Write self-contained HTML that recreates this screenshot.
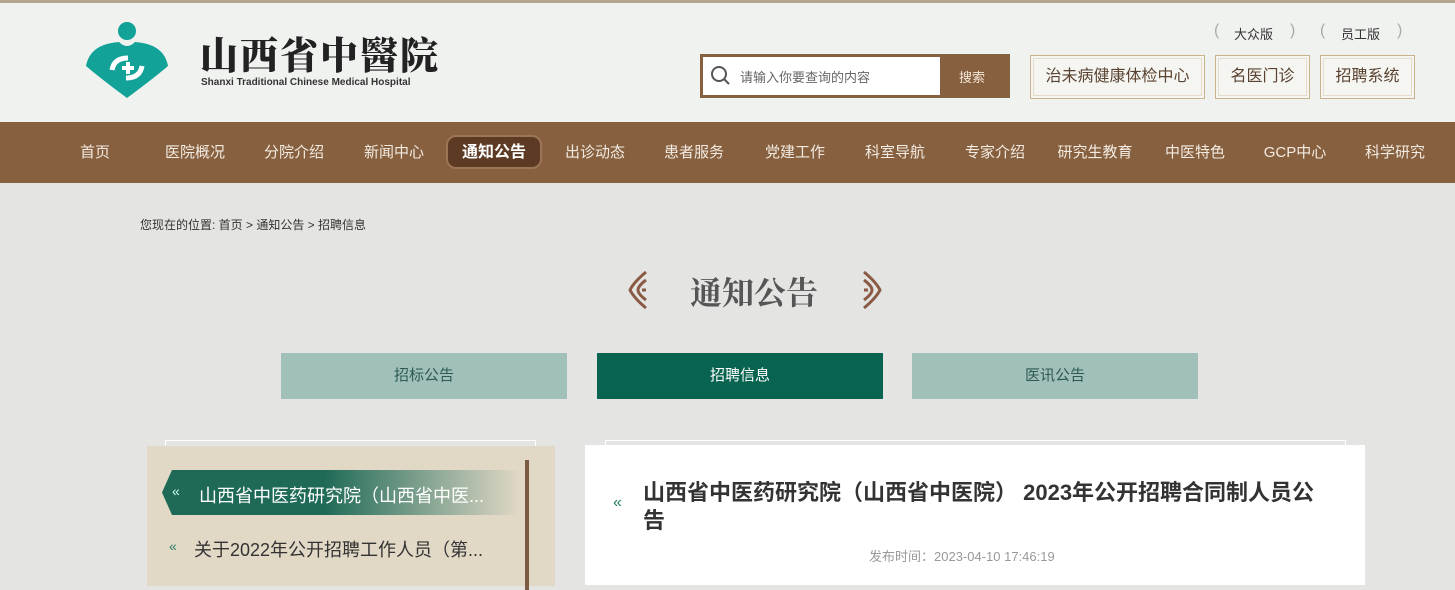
<!DOCTYPE html>
<html><head><meta charset="utf-8"><style>
*{margin:0;padding:0;box-sizing:border-box}
body{width:1455px;height:578px;overflow:hidden;background:#e4e4e3;font-family:"Liberation Sans","Noto Sans CJK SC",sans-serif;position:relative}
.hdr{position:absolute;left:0;top:0;width:1455px;height:122px;background:#f0f2f0;border-top:3px solid #b5a58e}
.nav{position:absolute;left:0;top:122px;width:1455px;height:61px;background:#87603f}
.nav span{position:absolute;top:0;line-height:61px;color:#f3ebe2;font-size:15px;transform:translateX(-50%);white-space:nowrap}
.nav .act{top:13px;line-height:32px;height:34px;padding:0 14px;background:#5d3a24;border:2px solid #9c7556;border-radius:10px;font-weight:bold;color:#fff;font-size:16px}
.abs{position:absolute}
.box{position:absolute;border:1px solid #c9b28e;font-size:16px;color:#5a4330;text-align:center;line-height:42px;height:44px;top:55px;background:#f5f5f2;outline:1px solid #e6dccb;outline-offset:-4px}
.tab{position:absolute;top:353px;width:286px;height:46px;line-height:46px;text-align:center;font-size:15px}
</style></head><body>
<div class="hdr"></div>
<svg class="abs" style="left:84px;top:20px" width="86" height="80" viewBox="0 0 86 80">
<circle cx="43" cy="11" r="9" fill="#12a297"/>
<path d="M35 22 Q43 30 51 22 Q80 24 84 46 Q70 58 43 78 Q16 58 2 46 Q6 24 35 22Z" fill="#12a297"/>
<path d="M28 50 Q30 38 44 38 M58 46 Q56 58 42 58" stroke="#fff" stroke-width="5" fill="none"/>
<path d="M38 48h12M44 42v12" stroke="#fff" stroke-width="4"/>
</svg>
<div class="abs" style="left:200px;top:32px;font-family:'Noto Serif CJK SC',serif;font-size:38px;font-weight:900;color:#222;letter-spacing:2px;line-height:42px">山西省中醫院</div>
<div class="abs" style="left:201px;top:77px;font-size:10px;font-weight:bold;color:#333">Shanxi Traditional Chinese Medical Hospital</div>
<div class="abs" style="left:1234px;top:24px;font-size:13px;color:#333">大众版</div>
<div class="abs" style="left:1214px;top:22px;color:#aaa;font-size:16px">(</div><div class="abs" style="left:1290px;top:22px;color:#aaa;font-size:16px">)</div>
<div class="abs" style="left:1341px;top:24px;font-size:13px;color:#333">员工版</div>
<div class="abs" style="left:1320px;top:22px;color:#aaa;font-size:16px">(</div><div class="abs" style="left:1397px;top:22px;color:#aaa;font-size:16px">)</div>
<div class="abs" style="left:700px;top:54px;width:310px;height:44px;background:#87603f"></div>
<div class="abs" style="left:703px;top:57px;width:237px;height:38px;background:#fff"></div>
<svg class="abs" style="left:710px;top:65px" width="22" height="22"><circle cx="9" cy="9" r="7" stroke="#555" stroke-width="2" fill="none"/><path d="M14 14l5 5" stroke="#555" stroke-width="2"/></svg>
<div class="abs" style="left:740px;top:67px;font-size:13px;color:#666">请输入你要查询的内容</div>
<div class="abs" style="left:959px;top:67px;font-size:13px;color:#f4e6d6">搜索</div>
<div class="box" style="left:1030px;width:175px">治未病健康体检中心</div>
<div class="box" style="left:1215px;width:95px">名医门诊</div>
<div class="box" style="left:1320px;width:95px">招聘系统</div>
<div class="nav">
<span style="left:95px">首页</span><span style="left:195px">医院概况</span><span style="left:294px">分院介绍</span><span style="left:394px">新闻中心</span><span class="act" style="left:494px">通知公告</span><span style="left:595px">出诊动态</span><span style="left:694px">患者服务</span><span style="left:795px">党建工作</span><span style="left:895px">科室导航</span><span style="left:995px">专家介绍</span><span style="left:1095px">研究生教育</span><span style="left:1195px">中医特色</span><span style="left:1295px">GCP中心</span><span style="left:1395px">科学研究</span>
</div>
<div class="abs" style="left:140px;top:216px;font-size:12px;color:#333">您现在的位置: 首页 &gt; 通知公告 &gt; 招聘信息</div>
<div class="abs" style="left:690px;top:270px;font-family:'Noto Serif CJK SC',serif;font-size:32px;font-weight:bold;color:#555;line-height:42px">通知公告</div>
<svg class="abs" style="left:626px;top:270px" width="26" height="40"><path d="M20 2 Q8 12 4 20 Q8 28 20 38 M20 10 Q12 16 12 20 Q12 24 20 30 M16 20h4" stroke="#8a5a44" stroke-width="3" fill="none"/></svg>
<svg class="abs" style="left:858px;top:270px" width="26" height="40"><path d="M6 2 Q18 12 22 20 Q18 28 6 38 M6 10 Q14 16 14 20 Q14 24 6 30 M10 20h-4" stroke="#8a5a44" stroke-width="3" fill="none"/></svg>
<div class="tab" style="left:281px;background:#a1c0b9;color:#2d5b52">招标公告</div>
<div class="tab" style="left:597px;background:#08644f;color:#fff">招聘信息</div>
<div class="tab" style="left:912px;background:#a1c0b9;color:#2d5b52">医讯公告</div>
<div class="abs" style="left:165px;top:440px;width:371px;height:10px;border:1px solid #fff;border-bottom:none"></div>
<div class="abs" style="left:147px;top:446px;width:408px;height:140px;background:#e1d8c6"></div>
<div class="abs" style="left:525px;top:460px;width:4px;height:130px;background:#7b5b42"></div>
<div class="abs" style="left:162px;top:470px;width:358px;height:45px;background:linear-gradient(90deg,#1e6a57 0%,#1e6a57 45%,#e1d8c6 100%);clip-path:polygon(10px 0,100% 0,100% 100%,10px 100%,0 50%)"></div>
<div class="abs" style="left:172px;top:483px;color:#cfe;font-size:14px">«</div>
<div class="abs" style="left:199px;top:482px;font-size:18px;color:#fff">山西省中医药研究院（山西省中医...</div>
<div class="abs" style="left:169px;top:538px;color:#2a7a66;font-size:14px">«</div>
<div class="abs" style="left:194px;top:536px;font-size:18px;color:#333">关于2022年公开招聘工作人员（第...</div>
<div class="abs" style="left:605px;top:440px;width:741px;height:10px;border:1px solid #fff;border-bottom:none"></div>
<div class="abs" style="left:585px;top:445px;width:780px;height:140px;background:#fff"></div>
<div class="abs" style="left:613px;top:494px;color:#2a7a66;font-size:16px">«</div>
<div class="abs" style="left:643px;top:479px;width:720px;font-size:22px;font-weight:bold;color:#333;line-height:28px;white-space:nowrap">山西省中医药研究院（山西省中医院） 2023年公开招聘合同制人员公<br>告</div>
<div class="abs" style="left:869px;top:546px;font-size:13px;color:#999">发布时间：2023-04-10 17:46:19</div>
</body></html>
